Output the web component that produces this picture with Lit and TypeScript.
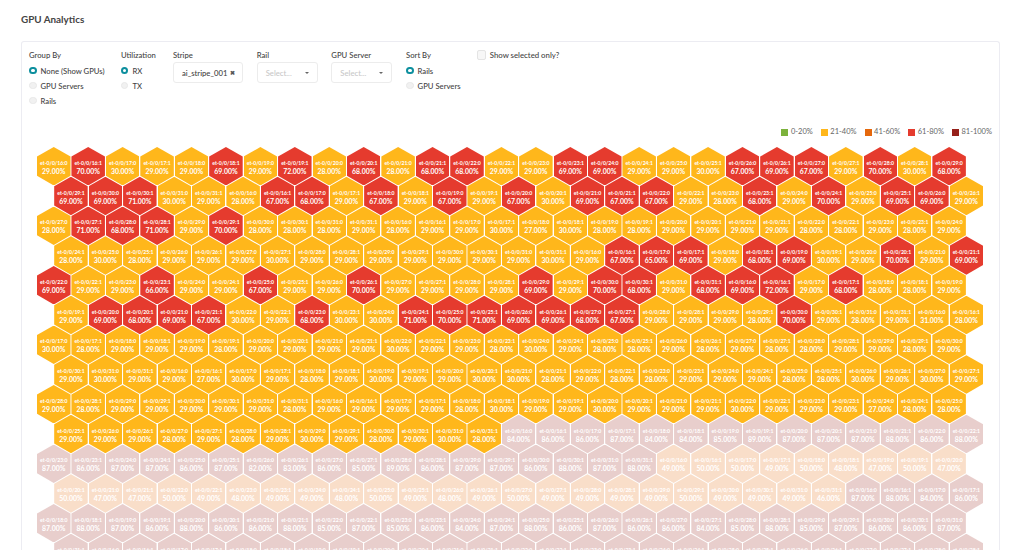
import { LitElement, html, css } from "lit";
import { customElement } from "lit/decorators.js";

const VALUES: number[] = [
  29,70,30,29,29,69,29,72,28,68,28,68,68,29,29,69,69,29,29,30,67,69,67,29,70,30,68,
  69,69,71,30,29,28,67,68,29,67,29,67,29,67,30,69,67,67,29,28,68,29,70,29,69,69,29,
  28,71,68,71,29,70,28,28,28,29,28,29,29,30,27,30,28,28,29,29,29,29,28,28,29,28,29,
  28,30,28,29,29,29,30,29,29,29,29,29,29,29,30,29,67,65,69,29,68,69,30,29,70,29,69,
  69,29,29,66,29,29,67,29,29,70,29,29,29,29,69,29,70,68,29,68,69,72,29,68,28,28,29,
  29,69,68,69,67,30,29,68,30,30,71,70,71,69,69,68,67,29,29,29,28,70,29,28,29,31,28,
  30,28,29,29,29,28,29,29,29,29,30,29,29,28,30,29,28,28,29,28,29,28,28,29,29,28,29,
  29,30,29,29,27,30,29,28,29,30,29,29,30,30,28,29,28,28,29,29,29,28,28,30,29,30,29,
  29,28,29,29,29,29,29,28,29,29,29,29,28,30,29,29,30,29,29,29,30,29,29,29,27,28,28,
  29,29,29,28,29,28,29,30,29,28,29,30,28,84,86,86,87,84,84,85,89,87,87,87,88,86,88,
  87,86,87,87,86,87,82,83,86,85,89,86,87,87,86,88,87,88,49,50,50,49,50,48,47,50,47,
  50,47,47,50,49,48,49,49,48,50,49,48,49,50,49,49,49,49,50,49,49,49,46,87,88,84,86,
  87,88,87,86,88,86,86,88,85,87,85,86,84,87,88,86,87,86,86,84,85,88,85,87,86,86,87,
  88,87,86,86,87,86,85,86,87,84,86,86,85,88,87,87,86,85,86,87,88,86,87,86,87,88,86,
];
const FADE_FROM = 9 * 27 + 13;
const PER_ROW = 27;
const PORTS = 32;

function tier(v: number): string {
  if (v <= 20) return "t1";
  if (v <= 40) return "t2";
  if (v <= 60) return "t3";
  if (v <= 80) return "t4";
  return "t5";
}

function label(i: number): string {
  const n = i % PORTS;
  const port = 16 + Math.floor(n / 2);
  return `et-0/0/${port}:${n % 2}`;
}

const LEGEND = [
  ["t1", "0-20%"],
  ["t2", "21-40%"],
  ["t3", "41-60%"],
  ["t4", "61-80%"],
  ["t5", "81-100%"],
];

@customElement("app-root")
export class AppRoot extends LitElement {
  static styles = css`
    :host {
      display: block;
      width: 1024px;
      height: 550px;
      overflow: hidden;
      background: #fff;
      font-family: Lato, "Open Sans", sans-serif;
      color: #444;
    }
    .page { padding: 13px 24px 0 21px; }
    h1 {
      margin: 0;
      font-size: 9.9px;
      line-height: 13px;
      font-weight: 700;
      color: #444;
    }
    .card {
      margin-top: 15px;
      border: 1px solid #ececf2;
      border-bottom: 0;
      border-radius: 3px 3px 0 0;
      padding: 8px 0 0 7px;
      height: 520px;
      box-sizing: border-box;
    }
    .filters { display: flex; gap: 13.7px; height: 77px; font-size: 7.7px; font-weight: 500; }
    .group { display: flex; flex-direction: column; }
    .w-group { width: 78.3px; }
    .w-util { width: 38.3px; }
    .w-stripe { width: 70px; }
    .w-rail { width: 61px; }
    .w-sort { width: 57px; }
    .lbl { height: 13px; line-height: 11px; color: #444; }
    .radio { display: flex; align-items: center; gap: 4px; height: 15px; white-space: nowrap; }
    .dot {
      width: 7.5px; height: 7.5px; box-sizing: border-box; border-radius: 50%;
      background: #f1f1f1; border: 1px solid #e8e8e8; flex: none;
    }
    .dot.on { background: #fff; border: 2.3px solid #0d8f9e; }
    .select {
      height: 21px; box-sizing: border-box; border: 1px solid #ececec; border-radius: 3px;
      display: flex; align-items: center; justify-content: space-between;
      padding: 0 8px; background: #fff; margin-top: -1px;
    }
    .placeholder { color: #c8c8c8; }
    .caret { width: 0; height: 0; border: 2px solid transparent; border-top: 2.5px solid #666; border-bottom: 0; }
    .x { font-size: 6px; font-weight: 900; color: #555; margin-right: -1px; }
    .check { display: flex; align-items: center; gap: 3.5px; height: 10px; line-height: 10px; white-space: nowrap; font-size: 7.8px; }
    .box { width: 9.5px; height: 10px; box-sizing: border-box; border: 1px solid #e4e4e4; border-radius: 2px; background: #f7f7f7; }
    .legend {
      display: flex; justify-content: flex-end; gap: 8px; padding-right: 7px;
      font-size: 7.5px; line-height: 10px; color: #666;
    }
    .lg { display: flex; align-items: center; gap: 2.5px; }
    .sw { width: 7px; height: 7px; }
    .sw.t1 { background: #7cb23c; }
    .sw.t2 { background: #ffb71b; }
    .sw.t3 { background: #e5680d; }
    .sw.t4 { background: #e53b2e; }
    .sw.t5 { background: #96201a; }
    .hexes { margin: 10px 0 0 8px; }
    .row { display: flex; gap: 0.95px; margin-bottom: -8.65px; }
    .row.odd { margin-left: 17.2px; }
    .hex {
      width: 33.5px; height: 38.4px; flex: none; box-sizing: border-box; padding-top: 1.5px;
      clip-path: polygon(50% 0, 100% 25%, 100% 75%, 50% 100%, 0 75%, 0 25%);
      color: #fff; font-weight: 700; text-align: center;
      display: flex; flex-direction: column; align-items: center; justify-content: center;
      white-space: nowrap;
    }
    .hex.t2 { background: #ffb71b; }
    .hex.t3 { background: #e5680d; }
    .hex.t4 { background: #e53b2e; }
    .hex.t5 { background: #96201a; }
    .hex.fade { opacity: 0.22; }
    .name { font-size: 5.1px; line-height: 8px; }
    .pct { font-size: 6.9px; line-height: 8px; }
  `;

  private radio(text: string, on = false) {
    return html`<div class="radio"><span class="dot ${on ? "on" : ""}"></span>${text}</div>`;
  }

  private rows() {
    const out = [];
    for (let r = 0; r * PER_ROW < VALUES.length; r++) {
      const cells = VALUES.slice(r * PER_ROW, (r + 1) * PER_ROW);
      out.push(html`<div class="row ${r % 2 ? "odd" : ""}">
        ${cells.map((v, c) => {
          const i = r * PER_ROW + c;
          return html`<div class="hex ${tier(v)} ${i >= FADE_FROM ? "fade" : ""}">
            <div class="name">${label(i)}</div>
            <div class="pct">${v}.00%</div>
          </div>`;
        })}
      </div>`);
    }
    return out;
  }

  render() {
    return html`<div class="page">
      <h1>GPU Analytics</h1>
      <div class="card">
        <div class="filters">
          <div class="group w-group">
            <div class="lbl">Group By</div>
            ${this.radio("None (Show GPUs)", true)}
            ${this.radio("GPU Servers")}
            ${this.radio("Rails")}
          </div>
          <div class="group w-util">
            <div class="lbl">Utilization</div>
            ${this.radio("RX", true)}
            ${this.radio("TX")}
          </div>
          <div class="group w-stripe">
            <div class="lbl">Stripe</div>
            <div class="select"><span>ai_stripe_001</span><span class="x">✖</span></div>
          </div>
          <div class="group w-rail">
            <div class="lbl">Rail</div>
            <div class="select"><span class="placeholder">Select...</span><span class="caret"></span></div>
          </div>
          <div class="group w-rail">
            <div class="lbl">GPU Server</div>
            <div class="select"><span class="placeholder">Select...</span><span class="caret"></span></div>
          </div>
          <div class="group w-sort">
            <div class="lbl">Sort By</div>
            ${this.radio("Rails", true)}
            ${this.radio("GPU Servers")}
          </div>
          <div class="group">
            <div class="check"><span class="box"></span>Show selected only?</div>
          </div>
        </div>
        <div class="legend">
          ${LEGEND.map(([t, s]) => html`<div class="lg"><span class="sw ${t}"></span>${s}</div>`)}
        </div>
        <div class="hexes">${this.rows()}</div>
      </div>
    </div>`;
  }
}
